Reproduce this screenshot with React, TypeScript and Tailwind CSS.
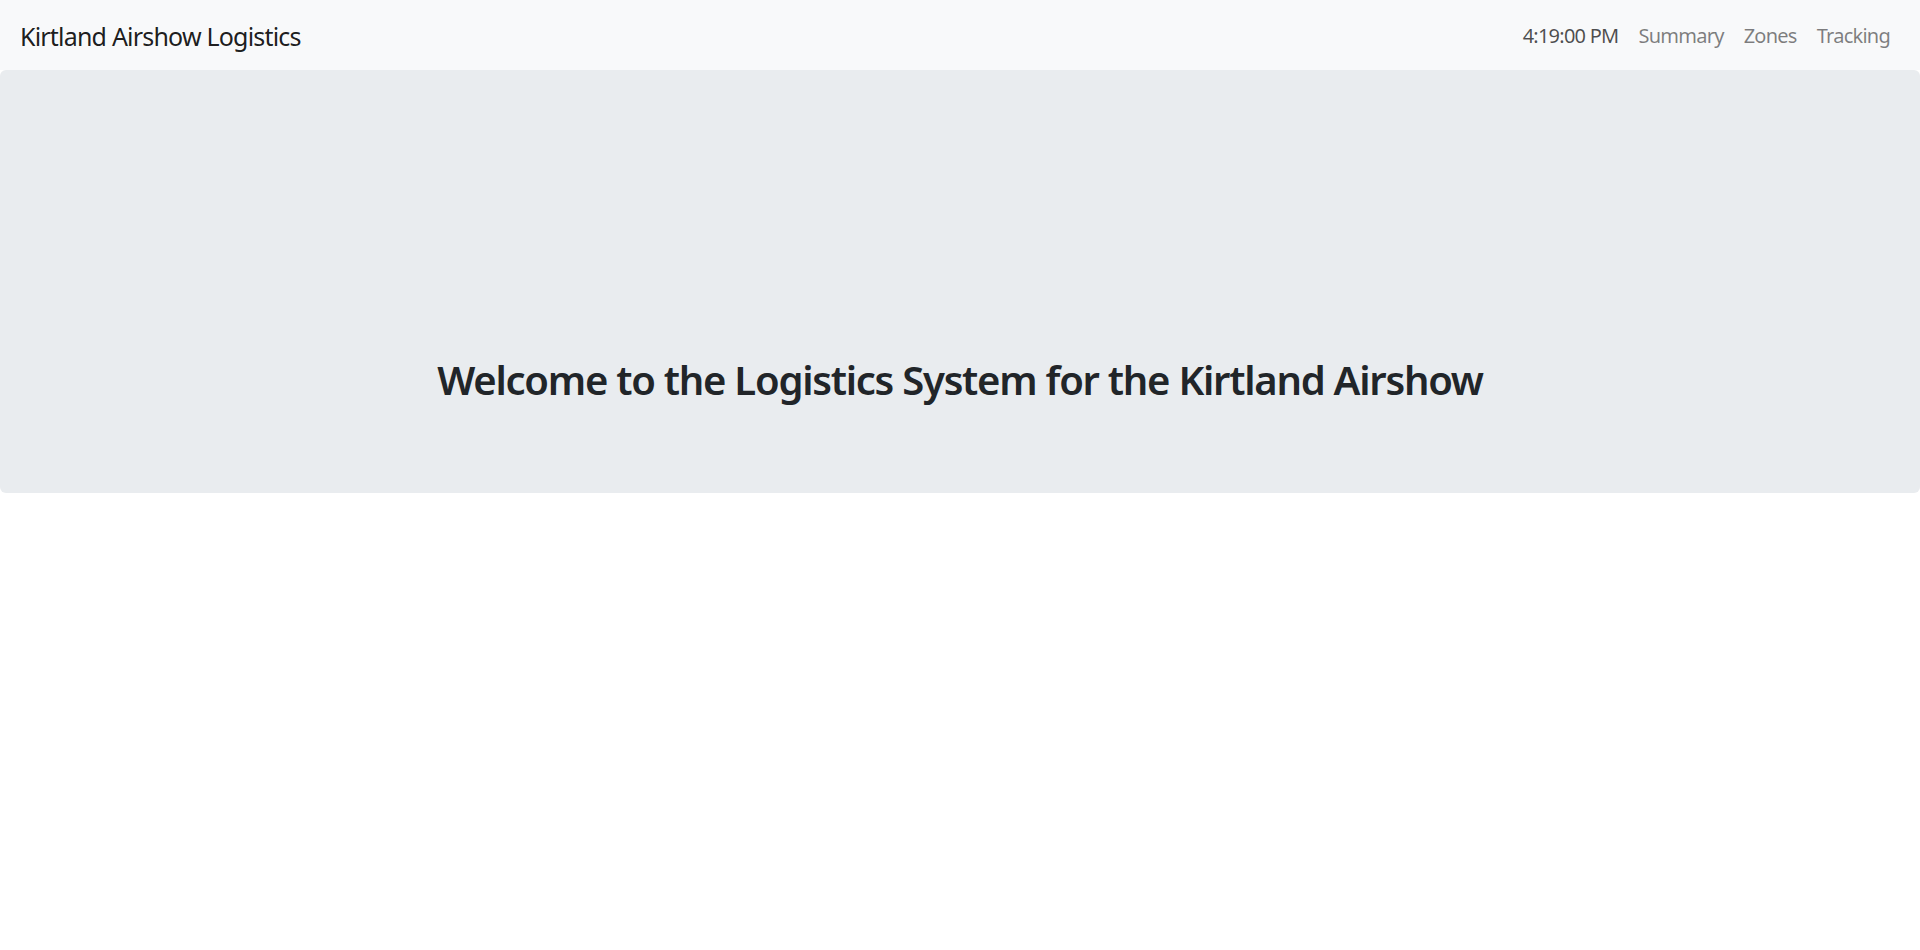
export default function App() {
  const navItem = "px-[10px] text-[20px] leading-[30px] tracking-[-0.75px]";
  return (
    <div className="min-h-[950px] bg-white font-['Noto_Sans',sans-serif] text-[#212529]">
      <nav className="flex h-[70px] items-center justify-between bg-[#f8f9fa] px-[20px]">
        <span className="pt-[2px] text-[25px] leading-[38px] tracking-[-0.8px] text-black/90">
          Kirtland Airshow Logistics
        </span>
        <div className="flex items-center pt-[1px]">
          <span className={`${navItem} text-black/70`}>4:19:00 PM</span>
          <a className={`${navItem} text-black/50`}>Summary</a>
          <a className={`${navItem} text-black/50`}>Zones</a>
          <a className={`${navItem} text-black/50`}>Tracking</a>
        </div>
      </nav>
      <div className="flex h-[423px] flex-col justify-end rounded-[6px] bg-[#e9ecef] px-[40px] pb-[89px]">
        <h2 className="text-center text-[40px] font-semibold leading-[48px] tracking-[-1.25px]">
          Welcome to the Logistics System for the Kirtland Airshow
        </h2>
      </div>
    </div>
  );
}
